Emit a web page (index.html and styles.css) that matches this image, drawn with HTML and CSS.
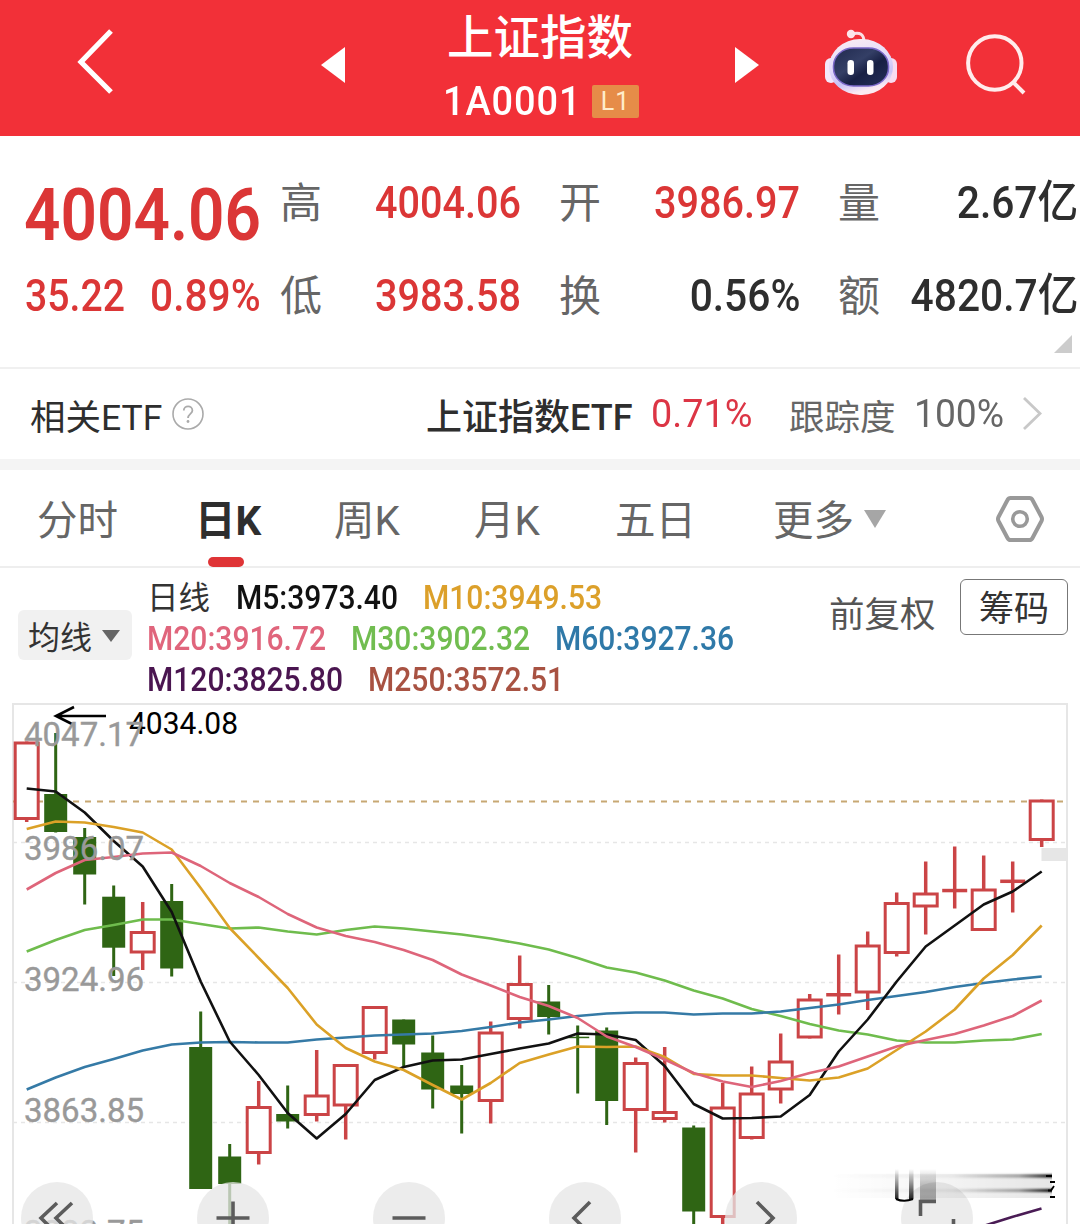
FILE: index.html
```html
<!DOCTYPE html>
<html lang="zh-CN">
<head>
<meta charset="utf-8">
<title>上证指数 1A0001</title>
<link rel="stylesheet" href="styles.css">
</head>
<body>
<header class="topbar">
  <svg class="back" width="40" height="70" viewBox="0 0 40 70"><path d="M36 5 6 36l30 30" fill="none" stroke="#fff" stroke-width="5.200"/></svg>
  <svg class="prev" width="24" height="36" viewBox="0 0 24 36"><path d="M24 0v36L0 18z" fill="#fff"/></svg>
  <div class="heading">
    <h1>上证指数</h1>
    <div class="code"><span class="code-text">1A0001</span><span class="level">L1</span></div>
  </div>
  <svg class="next" width="24" height="36" viewBox="0 0 24 36"><path d="M0 0v36l24-18z" fill="#fff"/></svg>
  <svg class="robot" width="74" height="70" viewBox="0 0 74 70">
    <defs>
      <linearGradient id="shell" x1="0" y1="0" x2="0.3" y2="1"><stop offset="0" stop-color="#fdeef2"/><stop offset=".5" stop-color="#e4dcfa"/><stop offset=".8" stop-color="#c9c2f6"/><stop offset="1" stop-color="#fbeaf2"/></linearGradient>
      <linearGradient id="face" x1="0" y1="0" x2="1" y2="1"><stop offset="0" stop-color="#20294e"/><stop offset=".4" stop-color="#343f66"/><stop offset=".6" stop-color="#182044"/><stop offset="1" stop-color="#26305a"/></linearGradient>
    </defs>
    <path d="M28 6c8-2 12 0 12 8" fill="none" stroke="#fbdfe5" stroke-width="3"/>
    <circle cx="27" cy="6" r="4.200" fill="#fde6ea"/>
    <rect x="1" y="30" width="12" height="25" rx="6" fill="#f3e8fb"/>
    <rect x="61" y="30" width="12" height="25" rx="6" fill="#f8dcf0"/>
    <rect x="5" y="11" width="64" height="56" rx="31" ry="28" fill="url(#shell)"/>
    <rect x="9.500" y="20" width="55" height="38" rx="20" ry="18" fill="url(#face)" stroke="#7b68c8" stroke-width="1.500"/>
    <rect x="23.500" y="32" width="6.500" height="15" rx="3.200" fill="#fff"/>
    <rect x="43" y="32" width="6.500" height="15" rx="3.200" fill="#fff"/>
  </svg>
  <svg class="search" width="64" height="64" viewBox="0 0 64 64"><g fill="none" stroke="#ffecec" stroke-width="4"><circle cx="28.800" cy="30" r="26.700"/><path d="m47 49 11 11"/></g></svg>
</header>

<section class="quote">
  <div class="last">
    <div class="last-price"><span>4004.06</span></div>
    <div class="change"><span class="delta">35.22</span><span class="pct">0.89%</span></div>
  </div>
  <dl class="stats">
    <div><dt>高</dt><dd class="up">4004.06</dd></div>
    <div><dt>开</dt><dd class="up">3986.97</dd></div>
    <div><dt>量</dt><dd>2.67亿</dd></div>
    <div><dt>低</dt><dd class="up">3983.58</dd></div>
    <div><dt>换</dt><dd>0.56%</dd></div>
    <div><dt>额</dt><dd>4820.7亿</dd></div>
  </dl>
  <i class="expand"></i>
</section>

<section class="etf">
  <span class="etf-title">相关ETF</span>
  <svg class="help" width="32" height="32" viewBox="0 0 32 32"><circle cx="16" cy="16" r="15" fill="none" stroke="#aaa" stroke-width="1.600"/><path d="M11.800 12.500c0-5.500 8.600-5.500 8.600 0 0 3.200-4.400 3.600-4.400 7.500" fill="none" stroke="#aaa" stroke-width="1.800"/><circle cx="16" cy="23.500" r="1.400" fill="#aaa"/></svg>
  <b class="etf-name">上证指数ETF</b>
  <span class="etf-pct">0.71%</span>
  <span class="track">跟踪度</span>
  <span class="track-pct">100%</span>
  <svg class="chev" width="20" height="34" viewBox="0 0 20 34"><path d="m1 1 16 15.500L1 32" fill="none" stroke="#c8c8c8" stroke-width="2.800"/></svg>
</section>

<nav class="tabs">
  <a>分时</a><a class="active">日K</a><a>周K</a><a>月K</a><a>五日</a><a class="more">更多<i class="caret"></i></a>
  <svg class="settings" width="50" height="48" viewBox="0 0 50 48"><path d="M15.500 3h19q2 0 3 2l9 17q1 2 0 4l-9 17q-1 2-3 2h-19q-2 0-3-2l-9-17q-1-2 0-4l9-17q1-2 3-2z" fill="none" stroke="#999" stroke-width="4"/><circle cx="25" cy="24" r="7.300" fill="none" stroke="#999" stroke-width="3.600"/></svg>
</nav>

<section class="legend">
  <div class="ma-select">均线<i class="caret"></i></div>
  <div class="ma">
    <div class="row"><span class="kind">日线</span><span class="m5"><b>M5:3973.40</b></span><span class="m10"><b>M10:3949.53</b></span></div>
    <div class="row"><span class="m20"><b>M20:3916.72</b></span><span class="m30"><b>M30:3902.32</b></span><span class="m60"><b>M60:3927.36</b></span></div>
    <div class="row"><span class="m120"><b>M120:3825.80</b></span><span class="m250"><b>M250:3572.51</b></span></div>
  </div>
  <span class="adjust">前复权</span>
  <span class="chips">筹码</span>
</section>

<main class="chart">
  <svg id="kline" width="1080" height="524" viewBox="0 700 1080 524">
    <g fill="none" stroke="#e6e6e6">
      <path d="M13 1224V704H1067V1224" stroke-width="2"/>
      <path d="M13 842.500H1067M13 982.500H1067M13 1122.500H1067" stroke-width="1.600" stroke-dasharray="4 4"/>
    </g>
    <path d="M13 801.500H1067" stroke="#c7a873" stroke-width="1.800" stroke-dasharray="6 6"/>
    <rect x="1041.500" y="848" width="26" height="13" fill="#e6e6e6"/>
    <g class="peak">
      <path d="M106 716H56M74 707 56 716l16 8" fill="none" stroke="#000" stroke-width="2.600"/>
      <text x="129" y="733.500" textLength="109" lengthAdjust="spacingAndGlyphs">4034.08</text>
    </g>
    <g id="candles"></g>
    <g id="averages"></g>
    <g class="axis">
      <text x="24" y="745.500" textLength="120" lengthAdjust="spacingAndGlyphs">4047.17</text>
      <text x="24" y="859.500" textLength="120" lengthAdjust="spacingAndGlyphs">3986.07</text>
      <text x="24" y="990.500" textLength="120" lengthAdjust="spacingAndGlyphs">3924.96</text>
      <text x="24" y="1121.500" textLength="120" lengthAdjust="spacingAndGlyphs">3863.85</text>
      <text x="24" y="1243.500" textLength="120" lengthAdjust="spacingAndGlyphs">3802.75</text>
    </g>
  </svg>
  <div class="tools">
    <svg viewBox="0 0 72 72"><path d="M36 21 20 36l16 16M51 21 35 36l16 16"/></svg>
    <svg viewBox="0 0 72 72"><path d="M19.500 36h33M36 19.500v33"/></svg>
    <svg viewBox="0 0 72 72"><path d="M19.500 36h33"/></svg>
    <svg viewBox="0 0 72 72"><path d="M41 20 25 36l16 16"/></svg>
    <svg viewBox="0 0 72 72"><path d="m32 20 16 16-16 16"/></svg>
    <svg viewBox="0 0 72 72"><path d="M35 19.500H19.500V34M52.500 37v15.500H37"/></svg>
  </div>
  <svg class="smear" width="240" height="40" viewBox="825 1166 240 40">
    <defs>
      <linearGradient id="streak"><stop offset="0" stop-color="#000" stop-opacity="0"/><stop offset=".55" stop-color="#000" stop-opacity=".06"/><stop offset=".85" stop-color="#000" stop-opacity=".35"/><stop offset="1" stop-color="#000"/></linearGradient>
      <linearGradient id="haze"><stop offset="0" stop-color="#000" stop-opacity="0"/><stop offset=".4" stop-color="#000" stop-opacity=".03"/><stop offset="1" stop-color="#000" stop-opacity=".1"/></linearGradient>
      <linearGradient id="fall" x2="0" y2="1"><stop offset="0" stop-color="#000" stop-opacity="0"/><stop offset="1" stop-color="#000" stop-opacity=".85"/></linearGradient>
      <linearGradient id="fallsoft" x2="0" y2="1"><stop offset="0" stop-color="#000" stop-opacity="0"/><stop offset=".5" stop-color="#000" stop-opacity=".24"/><stop offset="1" stop-color="#000" stop-opacity=".32"/></linearGradient>
      <filter id="soft" x="-2%" y="-100%" width="104%" height="300%"><feGaussianBlur stdDeviation="0 1"/></filter>
    </defs>
    <rect x="830" y="1174" width="222" height="24" fill="url(#haze)"/>
    <rect x="830" y="1174.500" width="222" height="3" fill="url(#streak)" filter="url(#soft)"/>
    <rect x="830" y="1189" width="222" height="3" fill="url(#streak)" filter="url(#soft)"/>
    <path d="M1046 1176h6M1050 1182h5M1048 1190.500h3l3-4.500M1050 1197h5" stroke="#000" stroke-width="1.800" fill="none"/>
    <rect x="895" y="1169" width="3.500" height="30" fill="url(#fall)"/>
    <rect x="909" y="1169" width="4.500" height="30" fill="url(#fall)"/>
    <path d="M896 1199q8 3.500 17 0" stroke="#000" stroke-width="2" fill="none"/>
    <rect x="920" y="1169" width="16" height="31" fill="url(#fallsoft)"/>
  </svg>
</main>
<script src="chart.js"></script>
</body>
</html>
```
FILE: styles.css
```css
* { box-sizing: border-box; }
body {
  margin: 0;
  width: 1080px;
  height: 1224px;
  overflow: hidden;
  background: #fff;
  color: #2e2e2e;
  font-family: Roboto, "Noto Sans CJK SC", sans-serif;
  display: flex;
  flex-direction: column;
}
i, b { font-style: normal; }

/* header */
.topbar {
  flex: none;
  height: 136px;
  background: #f23038;
  color: #fff;
  display: flex;
  align-items: flex-start;
}
.back { margin: 26px 0 0 75px; }
.prev { margin: 47px 0 0 206px; }
.heading { width: 200px; margin: 0 0 0 98px; display: flex; flex-direction: column; }
.heading h1 { margin: 6px 0 0 4px; font-size: 46.5px; line-height: 64px; font-weight: 500; white-space: nowrap; }
.code { display: flex; align-items: center; height: 62px; }
.code-text { width: 149px; font-size: 41px; font-weight: 500; line-height: 60px; transform: scaleX(.925); transform-origin: left; letter-spacing: 1px; }
.level {
  width: 47px; height: 33px; border-radius: 2px; background: #e68c48; color: #ffeccb;
  font-size: 25px; line-height: 34px; text-align: center; letter-spacing: 1px;
}
.next { margin: 47px 0 0 92px; }
.robot { margin: 28px 0 0 65px; }
.search { margin: 33px 0 0 68px; }

/* quote */
.quote {
  flex: none;
  position: relative;
  height: 233px;
  padding: 20px 0 0 25px;
  display: flex;
  border-bottom: 2px solid #f0f0f0;
}
.last { width: 255px; color: #db3636; }
.last-price { height: 119px; line-height: 119px; font-size: 73px; font-weight: 600; }
.last-price span { display: inline-block; transform: scaleX(.875); transform-origin: left; margin-left: -1px; }
.change { height: 42px; line-height: 42px; display: flex; font-size: 44px; font-weight: 500; }
.delta { width: 125px; transform: scaleX(.89); transform-origin: left; }
.pct { transform: scaleX(.925); transform-origin: left; }
.stats { margin: 0; width: 798px; display: grid; grid-template-columns: 241px 241px 240px; column-gap: 38px; grid-auto-rows: 93px; }
.stats div { display: flex; justify-content: space-between; align-items: center; }
.stats dt { font-size: 42px; line-height: 60px; color: #666; padding-top: 2px; }
.stats dd { margin: 0; font-size: 45px; line-height: 60px; font-weight: 500; white-space: nowrap; transform: scaleX(.905); transform-origin: right; }
.stats .up { transform: scaleX(.88); }
.up { color: #db3636; }
.expand { position: absolute; right: 8px; bottom: 14px; border-left: 18px solid transparent; border-bottom: 18px solid #ccc; }

/* related ETF */
.etf { flex: none; height: 90px; padding-left: 30px; display: flex; align-items: center; font-size: 35.5px; white-space: nowrap; }
.etf-title { width: 142px; }
.etf-name { margin-left: 222px; width: 225px; font-weight: 500; font-size: 36px; }
.etf-pct { width: 138px; font-size: 38px; color: #dc3545; transform: scaleX(.995); transform-origin: left; }
.track { width: 125px; color: #666; }
.track-pct { width: 109px; font-size: 38px; color: #666; transform: scaleX(.98); transform-origin: left; }

/* tabs */
.tabs {
  flex: none; height: 109px; border-top: 11px solid #f4f4f4; border-bottom: 2px solid #eee;
  padding-left: 37px; display: grid; grid-template-columns: 158px 139px 140px 141px 158px 222px auto; align-items: center;
  font-size: 40.5px; color: #666; white-space: nowrap;
}
.tabs a { line-height: 96px; height: 96px; padding-top: 3px; }
.tabs .active { font-weight: 700; color: #2e2e2e; position: relative; }
.tabs .active::after { content: ""; position: absolute; left: 13px; top: 87px; width: 36px; height: 10px; border-radius: 5px; background: #df3436; }
.settings { margin-top: 1px; }
.caret { display: inline-block; border: 11px solid transparent; border-top: 18px solid #a6a6a6; border-bottom: 0; }
.more .caret { margin-left: 10px; vertical-align: 7px; }

/* moving averages */
.legend { flex: none; height: 132px; display: flex; align-items: flex-start; color: #333; }
.ma-select { width: 114px; height: 50px; margin: 42px 15px 0 18px; padding: 3px 0 0 10px; border-radius: 6px; background: #f1f1f1; font-size: 32px; line-height: 50px; white-space: nowrap; }
.ma-select .caret { margin-left: 10px; vertical-align: 7px; border-width: 12px 9px 0; border-top-color: #666; }
.ma { width: 682px; padding-top: 9px; font-size: 33px; }
.row { display: flex; height: 41px; line-height: 41px; white-space: nowrap; }
.row b { display: inline-block; font-weight: 500; transform: scaleX(.91); transform-origin: left; }
.kind { width: 89px; font-size: 31.5px; padding-top: 1px; }
.m5 { width: 187px; color: #111; }
.m10 { color: #dca02a; }
.m20 { width: 204px; color: #e0657c; }
.m30 { width: 204px; color: #71bd50; }
.m60 { color: #2f79a8; }
.m120 { width: 221px; color: #4a1550; }
.m250 { color: #a85242; }
.adjust { width: 131px; margin-top: 21px; font-size: 35.5px; line-height: 52px; color: #555; }
.chips { width: 108px; height: 56px; margin-top: 11px; border: 1.500px solid #777; border-radius: 6px; font-size: 35px; line-height: 60px; text-align: center; }

/* chart */
.chart { position: relative; height: 524px; }
#kline { display: block; }
.axis { font-size: 34px; font-weight: 400; fill: #999; stroke: #999; stroke-width: .4; }
.peak { font-size: 31px; fill: #000; }
.candle-up { fill: #fff; stroke: #cb4446; stroke-width: 3; }
.candle-up-wick { stroke: #cb4446; stroke-width: 3.500; }
.candle-down { fill: #2f6514; }
.ma-line { fill: none; stroke-width: 2.600; stroke-linejoin: round; }
.tools { position: absolute; left: 21px; right: 0; top: 482px; height: 42px; overflow: hidden; display: flex; gap: 104px; }
.tools svg { flex: none; width: 72px; height: 72px; border-radius: 50%; background: rgba(230, 230, 230, .76); fill: none; stroke: #5c5c5c; stroke-width: 3.600; }
.smear { position: absolute; left: 825px; top: 466px; }
```
FILE: chart.js
```js
// Candles: [rising, body top, body bottom, high, low] in chart units.
const candles = [
  [1,741.5,820,741.5,822],[0,794,832,733,832.5],[0,837,874.5,828,904.5],[0,896.7,947.7,885.5,976],
  [1,931,953.5,902,970],[0,901,968.5,884,976.5],[0,1047,1189,1011.5,1189],[0,1156.5,1184,1144,1224],
  [1,1106,1154,1081,1164.5],[0,1114,1121.5,1085.5,1128.5],[1,1094.5,1116,1050,1121.5],[1,1064,1106.5,1064,1139.5],
  [1,1006,1054,1006,1059.5],[0,1019.5,1044.5,1019.5,1066],[0,1052.5,1089.5,1035.5,1108.5],[0,1085.5,1094,1065,1133.5],
  [1,1031.5,1102,1021.5,1123.5],[1,983,1020,955.5,1028.5],[0,1001.5,1017,985,1034.5],[0,1036.7,1038.2,1025.5,1093.5],
  [0,1030.5,1101,1027.5,1125],[1,1062,1111,1057.5,1152.5],[1,1111,1120,1047,1122.5],[0,1127.5,1211.5,1125.5,1224],
  [1,1106.5,1218,1083,1224],[1,1092.5,1139,1066.5,1139.5],[1,1060.5,1090.5,1033.5,1103.5],[1,998.5,1038.5,994,1038.5],
  [1,993,996.5,954.5,1014.5],[1,944.5,993.5,931.5,1010],[1,902,954,892.5,956.5],[1,892.5,907.5,861.5,934.5],
  [1,888.8,892.3,846.5,908.5],[1,888.5,931,855.5,931],[1,879.6,883,861.5,912.5],[1,799.5,841,799.5,847]
];
const averages = {
  "#6fbc4d": [951.5,940,930,925,919.5,919.5,924,928.5,927.5,931.5,934.5,930,926.5,928.5,931.5,934.5,938.5,943.5,949.5,958,967.5,972.5,980.5,990.5,998.5,1009,1016,1024,1030.5,1034.5,1040.5,1042.5,1042.5,1040.5,1039.5,1034],
  "#357aa6": [1089.5,1077.5,1067,1059,1050.5,1044.5,1042.5,1042,1042.5,1042.5,1039.5,1037.5,1035.5,1034.5,1033.5,1031,1027,1022.5,1019.5,1016,1013.5,1012.5,1012.5,1014.5,1013.5,1013.5,1011.5,1008,1004.5,1000,996,992,987,983,979.5,976.5],
  "#111": [788.5,791.5,812.5,841,866.5,912,981.5,1041.5,1075,1113,1138.5,1114,1080,1067,1060.5,1059.5,1054,1048.5,1043.5,1033.5,1034.5,1040,1066,1104,1118.5,1118,1116.5,1095,1051.5,1019.5,981.5,946.5,925.5,904.5,891.5,871.5],
  "#dba127": [829,821.5,822.5,827,832.5,849.5,888,928,958,988,1024.5,1048,1061.5,1070,1085,1099.5,1083,1063,1054.5,1046.5,1047,1046.5,1057,1074,1075.5,1075.5,1078,1080.5,1077.5,1068.5,1050,1031.5,1009.5,978.5,955,925.5],
  "#de657a": [889.5,873,860,857,853.5,852.5,866,883,897,914,927.5,936,942,950,960,974.5,985.5,997,1006,1018,1036.5,1047,1059.5,1073,1081.5,1087,1081,1073,1066.5,1056.5,1046.5,1040,1034,1025.5,1016,1000.5]
};
const NS = "http://www.w3.org/2000/svg";
const candleLayer = document.getElementById("candles");
const lineLayer = document.getElementById("averages");
const xAt = i => 26.7 + i * 29;

function add(parent, tag, attrs) {
  const el = document.createElementNS(NS, tag);
  for (const key in attrs) el.setAttribute(key, attrs[key]);
  parent.appendChild(el);
}

candles.forEach(([rising, top, bottom, high, low], i) => {
  const x = xAt(i);
  if (rising) {
    add(candleLayer, "path", { class: "candle-up-wick", d: `M${x} ${high}V${low}` });
    if (bottom - top < 5) {
      add(candleLayer, "path", { class: "candle-up-wick", d: `M${x - 12.5} ${(top + bottom) / 2}h25` });
    } else {
      add(candleLayer, "rect", { class: "candle-up", x: x - 11.5, y: top + 1.5, width: 23, height: bottom - top - 3 });
    }
  } else {
    add(candleLayer, "rect", { class: "candle-down", x: x - 1.5, y: high, width: 3, height: low - high });
    add(candleLayer, "rect", { class: "candle-down", x: x - 11.5, y: top, width: 23, height: bottom - top });
  }
});

for (const color in averages) {
  const points = averages[color].map((y, i) => `${xAt(i)},${y}`).join(" ");
  add(lineLayer, "polyline", { class: "ma-line", stroke: color, points });
}
add(lineLayer, "polyline", { class: "ma-line", stroke: "#4a1c55", points: "985,1225.5 1012,1217 1041.5,1208.5" });
```
